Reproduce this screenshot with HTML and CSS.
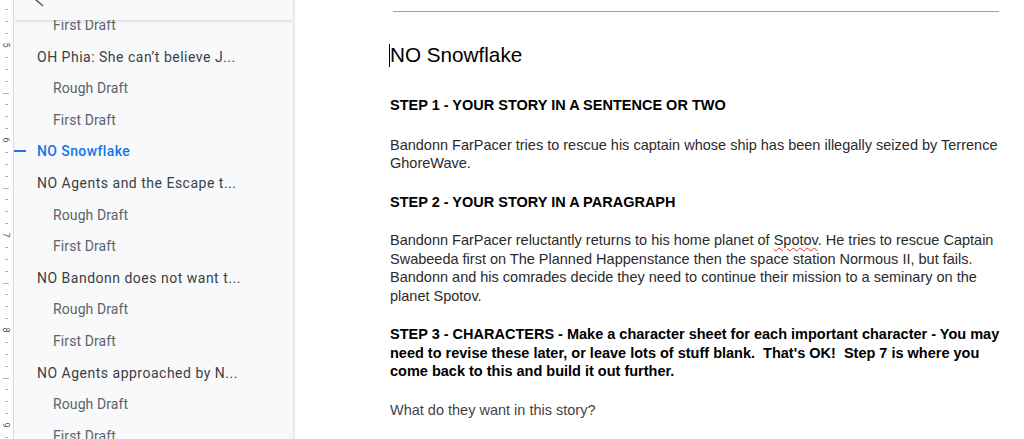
FILE: index.html
```html
<!DOCTYPE html>
<html>
<head>
<meta charset="utf-8">
<link rel="stylesheet" href="styles.css">
</head>
<body>
<div class="ruler">
  <svg width="13" height="439" viewBox="0 0 13 439">
    <path class="tick" d="M5 9.5h3M5 21.5h3M5 33.5h3M5 57.5h3M5 69.5h3M5 81.5h3M3 93.5h6M5 104.5h3M5 116.5h3M5 128.5h3M5 152.5h3M5 164.5h3M5 176.5h3M3 188.5h6M5 199.5h3M5 211.5h3M5 223.5h3M5 247.5h3M5 259.5h3M5 271.5h3M3 283.5h6M5 294.5h3M5 306.5h3M5 318.5h3M5 342.5h3M5 354.5h3M5 366.5h3M3 378.5h6M5 389.5h3M5 401.5h3M5 413.5h3M5 437.5h3"/>
    <text class="num" transform="translate(6 45) rotate(90)">5</text>
    <text class="num" transform="translate(6 140) rotate(90)">6</text>
    <text class="num" transform="translate(6 235) rotate(90)">7</text>
    <text class="num" transform="translate(6 330) rotate(90)">8</text>
    <text class="num" transform="translate(6 425) rotate(90)">9</text>
  </svg>
</div>
<aside class="sidebar">
  <div class="outline-header">
    <svg class="back" width="40" height="20" viewBox="0 0 40 20"><path d="M21 -1L29 6" /></svg>
  </div>
  <ul class="outline">
    <li class="item sub">First Draft</li>
    <li class="item">OH Phia: She can’t believe J...</li>
    <li class="item sub">Rough Draft</li>
    <li class="item sub">First Draft</li>
    <li class="item active">NO Snowflake</li>
    <li class="item">NO Agents and the Escape t...</li>
    <li class="item sub">Rough Draft</li>
    <li class="item sub">First Draft</li>
    <li class="item">NO Bandonn does not want t...</li>
    <li class="item sub">Rough Draft</li>
    <li class="item sub">First Draft</li>
    <li class="item">NO Agents approached by N...</li>
    <li class="item sub">Rough Draft</li>
    <li class="item sub">First Draft</li>
  </ul>
</aside>
<main class="doc">
  <div class="rule"></div>
  <h1 class="title"><span class="caret"></span>NO Snowflake</h1>
  <p class="step first">STEP 1 - YOUR STORY IN A SENTENCE OR TWO</p>
  <p class="para">Bandonn FarPacer tries to rescue his captain whose ship has been illegally seized by Terrence GhoreWave.</p>
  <p class="step">STEP 2 - YOUR STORY IN A PARAGRAPH</p>
  <p class="para">Bandonn FarPacer reluctantly returns to his home planet of <span class="spell">Spotov</span>. He tries to rescue Captain Swabeeda first on The Planned Happenstance then the space station Normous II, but fails. Bandonn and his comrades decide they need to continue their mission to a seminary on the planet Spotov.</p>
  <p class="step">STEP 3 - CHARACTERS - Make a character sheet for each important character - You may need to revise these later, or leave lots of stuff blank.&nbsp; That's OK!&nbsp; Step 7 is where you come back to this and build it out further.</p>
  <p class="para light">What do they want in this story?</p>
</main>
</body>
</html>
```

FILE: styles.css
```css
html, body {
  margin: 0;
  padding: 0;
}
body {
  display: flex;
  width: 1024px;
  height: 439px;
  overflow: hidden;
  background: #fff;
}
.ruler {
  width: 13px;
  flex: none;
  border-right: 1px solid #dadce0;
  background: #fff;
}
.ruler svg {
  display: block;
}
.tick {
  stroke: #b0b3b8;
  stroke-width: 1;
  fill: none;
}
.num {
  font-family: Roboto, "Liberation Sans", sans-serif;
  font-size: 9px;
  fill: #7a3f6e;
  text-anchor: middle;
  dominant-baseline: central;
}
.sidebar {
  position: relative;
  width: 279px;
  flex: none;
  background: #f8f9fa;
  border-right: 1px solid #e3e5e8;
  box-shadow: 1px 0 1px rgba(60, 64, 67, 0.08);
  overflow: hidden;
}
.outline-header {
  position: absolute;
  top: 0;
  left: 0;
  right: 0;
  height: 20px;
  background: #f8f9fa;
  box-shadow: 0 1px 3px rgba(60, 64, 67, 0.2);
  z-index: 1;
  overflow: hidden;
}
.back {
  display: block;
}
.back path {
  stroke: #5f6368;
  stroke-width: 1.6;
  fill: none;
}
.outline {
  list-style: none;
  margin: 0;
  padding: 9.2px 0 0;
}
.item {
  display: flex;
  align-items: center;
  height: 31.6px;
  padding-left: 23px;
  font-family: Roboto, "Liberation Sans", sans-serif;
  font-size: 14px;
  letter-spacing: 0.5px;
  color: #3c4043;
  white-space: nowrap;
}
.item.sub {
  padding-left: 39px;
  letter-spacing: 0.1px;
  color: #5f6368;
}
.item.active {
  color: #1a73e8;
  font-weight: 500;
  letter-spacing: 0.4px;
}
.item.active::before {
  content: "";
  width: 12px;
  height: 2px;
  background: #1a73e8;
  margin-left: -23px;
  margin-right: 11px;
}
.doc {
  flex: 1;
  padding: 0 20px 0 96px;
  font-family: "Liberation Sans", Arial, sans-serif;
}
.rule {
  height: 1px;
  background: #a3a3a3;
  margin: 11px 5px 0 3px;
}
.title {
  margin: 30px 0 0;
  font-size: 20.7px;
  font-weight: normal;
  line-height: 26px;
  color: #000;
}
.caret {
  display: inline-block;
  width: 1px;
  height: 23px;
  background: #000;
  vertical-align: -5px;
  margin-left: -1px;
}
.step, .para {
  margin: 0 0 20px;
  font-size: 14.5px;
  line-height: 18.5px;
}
.step {
  font-weight: bold;
  color: #000;
}
.step.first {
  margin-top: 27.7px;
  margin-bottom: 21.5px;
}
.para {
  color: #2b2b2b;
}
.para.light {
  color: #444;
}
.spell {
  text-decoration: underline wavy #d93025;
  text-decoration-thickness: 1px;
  text-underline-offset: 2px;
}
```
